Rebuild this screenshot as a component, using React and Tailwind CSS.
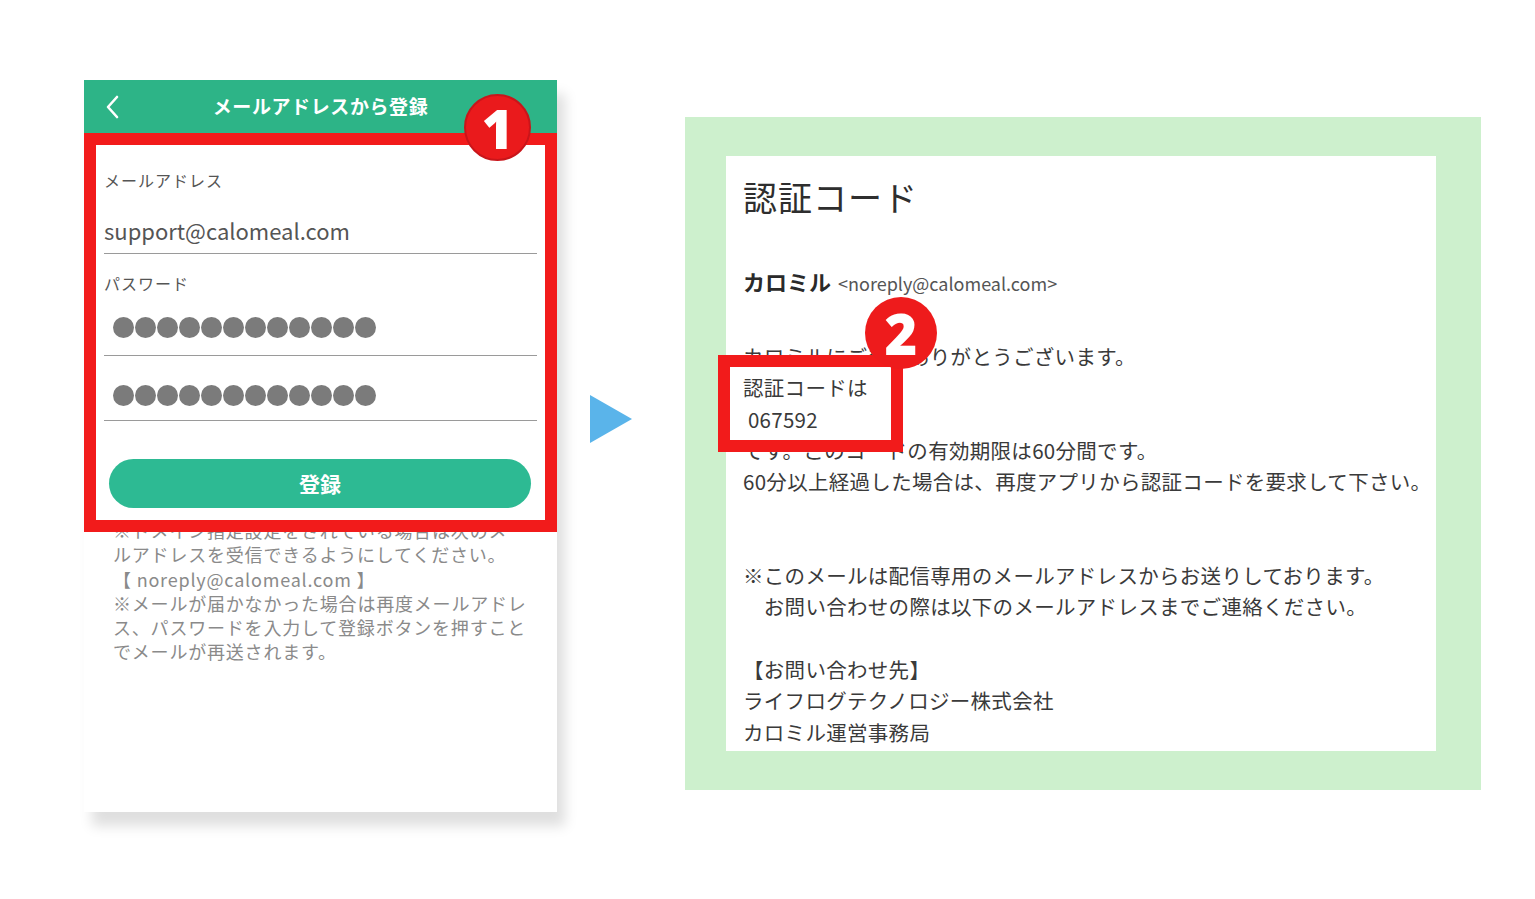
const jp = { fontFamily: '"Noto Sans CJK JP", "Noto Sans", sans-serif' }

function Dots() {
  return (
    <div className="flex gap-px pl-[9px]">
      {Array.from({ length: 12 }).map((_, i) => (
        <span key={i} className="block h-[21px] w-[21px] rounded-full bg-[#7b7b7b]" />
      ))}
    </div>
  )
}

function PhoneScreen() {
  return (
    <div className="relative mt-[80px] h-[732px] w-[473px] flex-none bg-white shadow-[8px_14px_12px_rgba(0,0,0,0.13)]">
      <div className="relative flex h-[53px] items-center justify-center bg-[#2db487]">
        <svg className="absolute left-[20px] top-[14px]" width="18" height="26" viewBox="0 0 18 26">
          <polyline points="13,3 4,13 13,23" fill="none" stroke="white" strokeWidth="2.6" strokeLinecap="round" strokeLinejoin="round" />
        </svg>
        <span className="text-[19px] font-bold tracking-[0.6px] text-white">メールアドレスから登録</span>
      </div>

      <div className="px-[20px]">
        <div className="mt-[35px] text-[16px] leading-[24px] tracking-[1px] text-[#555]">メールアドレス</div>
        <div className="mt-[23px] border-b border-[#9a9a9a] pb-[8px] text-[22px] leading-[30px] text-[#555]">
          support@calomeal.com
        </div>
        <div className="mt-[17px] text-[16px] leading-[24px] tracking-[1px] text-[#555]">パスワード</div>
        <div className="mt-[22px] border-b border-[#9a9a9a] pb-[17px]">
          <Dots />
        </div>
        <div className="mt-[29px] border-b border-[#9a9a9a] pb-[14px]">
          <Dots />
        </div>
        <div className="ml-[5px] mr-[6px] mt-[38px] flex h-[49px] items-center justify-center rounded-full bg-[#2dba93]">
          <span className="text-[21px] font-bold text-white">登録</span>
        </div>
        <div className="ml-[9px] mt-[10px] text-[18px] leading-[24.3px] tracking-[0.8px] text-[#8a8a8a]">
          <div>※ドメイン指定設定をされている場合は次のメ</div>
          <div>ルアドレスを受信できるようにしてください。</div>
          <div>【 noreply@calomeal.com 】</div>
          <div>※メールが届かなかった場合は再度メールアドレ</div>
          <div>ス、パスワードを入力して登録ボタンを押すこと</div>
          <div>でメールが再送されます。</div>
        </div>
      </div>

      <div className="pointer-events-none absolute left-0 top-[53px] h-[399px] w-[473px] border-[12px] border-[#f21b1b]" />
      <div className="absolute left-[380px] top-[14px] flex h-[67px] w-[67px] items-center justify-center rounded-full border-2 border-[#c9151a] bg-[#ea1a1c]">
        <span className="text-[54px] font-black leading-none text-white" style={{ fontFamily: '"Noto Sans", sans-serif' }}>1</span>
      </div>
    </div>
  )
}

function EmailPanel() {
  const line = 'text-[20.5px] leading-[31.3px] tracking-[0.3px] text-[#3a3a3a]'
  return (
    <div className="ml-[53px] mt-[117px] h-[673px] w-[796px] flex-none bg-[#cdf0cd] pb-[39px] pl-[41px] pr-[45px] pt-[39px]">
      <div className="relative h-full w-full bg-white pl-[17px]">
        <div className="pt-[19px] text-[34px] leading-[44px] tracking-[1px] text-[#2e2e2e]">認証コード</div>
        <div className="mt-[46px] flex items-baseline gap-[7px] leading-[32px]">
          <span className="text-[22px] font-bold text-[#2a2a2a]">カロミル</span>
          <span className="text-[18px] text-[#555]">&lt;noreply@calomeal.com&gt;</span>
        </div>
        <div className="mt-[42px]">
          <div className={line}>カロミルにご登録ありがとうございます。</div>
          <div className={line}>認証コードは</div>
          <div className={line}>&nbsp;067592</div>
          <div className={line}>です。このコードの有効期限は60分間です。</div>
          <div className={line}>60分以上経過した場合は、再度アプリから認証コードを要求して下さい。</div>
          <div className={line}>&nbsp;</div>
          <div className={line}>&nbsp;</div>
          <div className={line}>※このメールは配信専用のメールアドレスからお送りしております。</div>
          <div className={line}>&#12288;お問い合わせの際は以下のメールアドレスまでご連絡ください。</div>
          <div className={line}>&nbsp;</div>
          <div className={line}>【お問い合わせ先】</div>
          <div className={line}>ライフログテクノロジー株式会社</div>
          <div className={line}>カロミル運営事務局</div>
        </div>

        <div className="pointer-events-none absolute left-[-8px] top-[199px] h-[97px] w-[185px] border-[12px] border-[#f21b1b]" />
        <div className="absolute left-[139px] top-[141px] flex h-[72px] w-[72px] items-center justify-center rounded-full bg-[#ee1b1c]">
          <span className="text-[56px] font-black leading-none text-white" style={{ fontFamily: '"Noto Sans", sans-serif' }}>2</span>
        </div>
      </div>
    </div>
  )
}

export default function App() {
  return (
    <div className="flex h-[899px] w-[1535px] items-start overflow-hidden bg-white pl-[84px]" style={jp}>
      <PhoneScreen />
      <svg className="ml-[33px] mt-[395px] flex-none" width="42" height="48" viewBox="0 0 42 48">
        <polygon points="0,0 42,24 0,48" fill="#5ab4ea" />
      </svg>
      <EmailPanel />
    </div>
  )
}
